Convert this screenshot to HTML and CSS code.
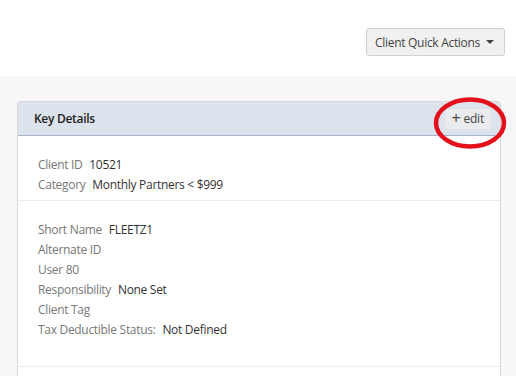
FILE: index.html
```html
<!DOCTYPE html>
<html lang="en">
<head>
  <meta charset="UTF-8" />
  <title>Client</title>
  <link rel="stylesheet" href="styles.css">
</head>
<body>

  <div class="topbar">
    <button class="actions-btn">Client Quick Actions <span class="caret"></span></button>
  </div>

  <div class="content">
    <div class="card">
      <div class="card-head">
        <span class="card-title">Key Details</span>
        <button class="edit-btn"><span class="plus">+</span> edit</button>
        <svg class="circle-mark" width="80" height="54" viewBox="0 0 80 54">
          <ellipse cx="40" cy="27" rx="34" ry="23.5" fill="none" stroke="#e3101b" stroke-width="4.5"/>
        </svg>
      </div>

      <div class="section">
        <div class="row"><span class="label">Client ID</span> <span class="value">10521</span></div>
        <div class="row"><span class="label">Category</span> <span class="value">Monthly Partners &lt; $999</span></div>
      </div>

      <div class="section tall">
        <div class="row"><span class="label">Short Name</span> <span class="value">FLEETZ1</span></div>
        <div class="row"><span class="label">Alternate ID</span></div>
        <div class="row"><span class="label">User 80</span></div>
        <div class="row"><span class="label">Responsibility</span> <span class="value">None Set</span></div>
        <div class="row"><span class="label">Client Tag</span></div>
        <div class="row"><span class="label">Tax Deductible Status:</span> <span class="value">Not Defined</span></div>
      </div>

      <div class="section more"></div>
    </div>
  </div>

</body>
</html>
```

FILE: styles.css
```css
body, html {
  margin: 0;
  padding: 0;
  font-family: "Open Sans", "Noto Sans", Arial, sans-serif;
  font-size: 12px;
  letter-spacing: -0.3px;
  color: #333;
  background: #f7f7f7;
}

.topbar {
  background: #fff;
  height: 76px;
  display: flex;
  justify-content: flex-end;
  align-items: flex-start;
  padding: 28px 11px 0 0;
  box-sizing: border-box;
}

.actions-btn {
  font-family: inherit;
  font-size: 12px;
  letter-spacing: -0.3px;
  color: #444;
  background: #f0f0f0;
  border: 1px solid #d0d0d0;
  border-radius: 3px;
  height: 28px;
  padding: 0 10px 0 8px;
  display: flex;
  align-items: center;
  gap: 1px;
}

.caret {
  display: inline-block;
  width: 0;
  height: 0;
  margin-left: 5px;
  border-left: 4px solid transparent;
  border-right: 4px solid transparent;
  border-top: 4px solid #444;
}

.content {
  padding: 25px 15px 0 17px;
}

.card {
  background: #fff;
  border: 1px solid #d8d8d8;
  border-radius: 3px 3px 0 0;
}

.card-head {
  position: relative;
  height: 33px;
  background: #dde3ec;
  border-bottom: 1px solid #a7b6cb;
  display: flex;
  align-items: center;
  justify-content: space-between;
  padding: 0 8px 0 16px;
}

.card-title {
  font-weight: 600;
  color: #222;
}

.edit-btn {
  font-family: inherit;
  font-size: 12px;
  letter-spacing: -0.2px;
  color: #444;
  background: #e9ebee;
  border: 1px solid #dde1e7;
  border-radius: 3px;
  height: 22px;
  padding: 0 7px;
}

.plus {
  font-size: 16px;
  line-height: 1;
  vertical-align: -1px;
}

.circle-mark {
  position: absolute;
  right: -10px;
  top: -6px;
}

.section {
  padding: 19px 20px 5px;
  border-bottom: 1px solid #ececec;
}

.section.tall {
  padding: 19px 20px 26px;
}

.section.more {
  height: 9px;
  padding: 0;
  border-bottom: none;
}

.row {
  line-height: 20px;
  height: 20px;
}

.label {
  color: #777;
  margin-right: 4px;
}

.value {
  color: #333;
}
```
